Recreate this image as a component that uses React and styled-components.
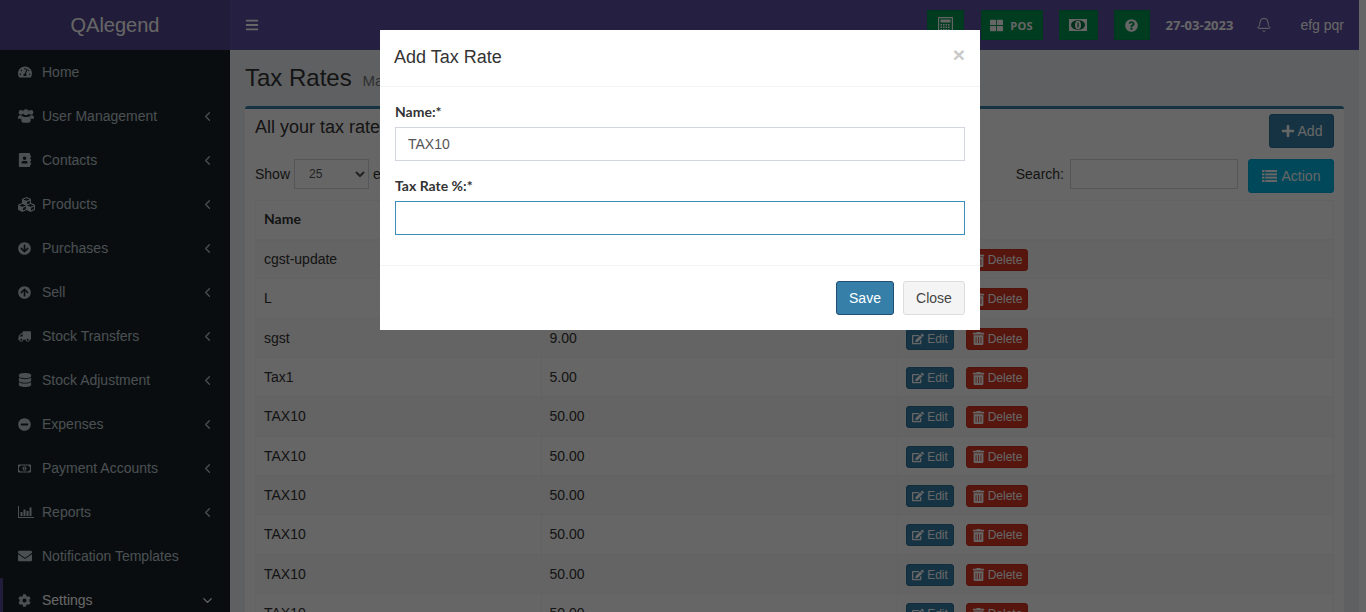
import styled, { createGlobalStyle } from "styled-components";
import {
    FaTachometerAlt, FaAddressBook, FaCubes, FaArrowCircleDown, FaArrowCircleUp, FaTruck,
    FaDatabase, FaMinusCircle, FaRegMoneyBillAlt, FaEnvelope, FaCog,
    FaThLarge, FaQuestionCircle, FaBars, FaPlus, FaEdit, FaTrashAlt,
} from "react-icons/fa";
import { Bell, ChevronDown, ChevronLeft } from "lucide-react";

function UsersIcon() {
    return (
        <svg width="16" height="14" viewBox="0 0 16 14" fill="currentColor">
            <circle cx="3" cy="3.4" r="2.3" />
            <circle cx="13" cy="3.4" r="2.3" />
            <circle cx="8" cy="3.2" r="3" />
            <path d="M0 9.4C0 7.2.8 6.3 2.2 6.3c.6 0 1 .4 2 .6-.4.8-.6 1.6-.6 2.8H1C.4 9.7 0 9.6 0 9.4z" />
            <path d="M16 9.4c0-2.2-.8-3.1-2.2-3.1-.6 0-1 .4-2 .6.4.8.6 1.6.6 2.8H15c.6 0 1-.1 1-.3z" />
            <path d="M4.6 7.2c1 .6 2.1.9 3.4.9s2.400-.3 3.400-.9c.9.5 1.300 2 1.300 3.900 0 1.700-.8 2.600-2.200 2.600H5.500c-1.400 0-2.200-.9-2.200-2.600 0-1.900.4-3.400 1.300-3.900z" />
        </svg>
    );
}

function ReportIcon() {
    return (
        <svg width="16" height="12" viewBox="0 0 16 12" fill="currentColor">
            <rect x="0" y="0" width="1" height="12" />
            <rect x="0" y="11" width="16" height="1" />
            <rect x="2.500" y="6" width="2" height="4" />
            <rect x="5.500" y="3.500" width="2" height="6.500" />
            <rect x="8.500" y="5" width="2" height="5" />
            <rect x="11.500" y="1.500" width="2" height="8.500" />
        </svg>
    );
}

function CalculatorIcon() {
    const keys = [];
    for (let r = 0; r < 3; r++) {
        for (let c = 0; c < 4; c++) {
            keys.push(<rect key={`${r}-${c}`} x={2.500 + c * 2.500} y={7 + r * 2.500} width="1.600" height="1.500" />);
        }
    }
    return (
        <svg width="15" height="16" viewBox="0 0 15 16" fill="currentColor">
            <path fillRule="evenodd" d="M1 0h13a1 1 0 0 1 1 1v14a1 1 0 0 1-1 1H1a1 1 0 0 1-1-1V1a1 1 0 0 1 1-1zm.2 1.200v13.600h12.600V1.200zM2.500 2.500h10v3h-10z" />
            {keys}
        </svg>
    );
}

function MoneyIcon() {
    return (
        <svg width="18" height="12" viewBox="0 0 18 12">
            <rect width="18" height="12" fill="currentColor" />
            <ellipse cx="9" cy="6" rx="7" ry="4.800" fill="#00733f" />
            <ellipse cx="9" cy="6" rx="3" ry="4.300" fill="currentColor" />
            <rect x="8.400" y="3.500" width="1.200" height="5" fill="#00733f" />
        </svg>
    );
}

function ListIcon() {
    const lines = [0, 3.300, 6.600, 9.900];
    return (
        <svg width="15" height="12" viewBox="0 0 15 12" fill="currentColor">
            {lines.map((y) => (
                <g key={y}>
                    <rect x="0" y={y} width="2.500" height="2.100" />
                    <rect x="3.300" y={y} width="11.700" height="2.100" />
                </g>
            ))}
        </svg>
    );
}

const FlippedTruck = styled(FaTruck)`
    transform: scaleX(-1);
`;

const menu = [
    { label: "Home", icon: FaTachometerAlt, size: 14 },
    { label: "User Management", icon: UsersIcon, arrow: true },
    { label: "Contacts", icon: FaAddressBook, size: 14, arrow: true },
    { label: "Products", icon: FaCubes, size: 17, arrow: true },
    { label: "Purchases", icon: FaArrowCircleDown, size: 13, arrow: true },
    { label: "Sell", icon: FaArrowCircleUp, size: 13, arrow: true },
    { label: "Stock Transfers", icon: FlippedTruck, size: 13, arrow: true },
    { label: "Stock Adjustment", icon: FaDatabase, size: 14, arrow: true },
    { label: "Expenses", icon: FaMinusCircle, size: 13, arrow: true },
    { label: "Payment Accounts", icon: FaRegMoneyBillAlt, size: 13, arrow: true },
    { label: "Reports", icon: ReportIcon, arrow: true },
    { label: "Notification Templates", icon: FaEnvelope, size: 14 },
    { label: "Settings", icon: FaCog, size: 13, open: true },
];

const rows = [
    ["cgst-update", ""],
    ["L", ""],
    ["sgst", "9.00"],
    ["Tax1", "5.00"],
    ["TAX10", "50.00"],
    ["TAX10", "50.00"],
    ["TAX10", "50.00"],
    ["TAX10", "50.00"],
    ["TAX10", "50.00"],
    ["TAX10", "50.00"],
];

export default function App() {
    return (
        <Page>
            <GlobalStyle />
            <Main>
                <Side>
                    <Logo>QAlegend</Logo>
                    <nav>
                        {menu.map((item) => (
                            <MenuItem key={item.label} $active={item.open}>
                                <MenuIcon $size={item.size}><item.icon /></MenuIcon>
                                <MenuLabel $active={item.open}>{item.label}</MenuLabel>
                                {item.arrow && <MenuArrow><ChevronLeft size={15} strokeWidth={2} /></MenuArrow>}
                                {item.open && <MenuArrow $open><ChevronDown size={15} strokeWidth={2} /></MenuArrow>}
                            </MenuItem>
                        ))}
                    </nav>
                </Side>
                <Right>
                    <TopBar>
                        <Burger><FaBars /></Burger>
                        <TopTools>
                            <GreenButton $w={37}><CalculatorIcon /></GreenButton>
                            <GreenButton $w={62} $gap={17}><FaThLarge /><PosText>POS</PosText></GreenButton>
                            <GreenButton $w={39} $gap={16}><MoneyIcon /></GreenButton>
                            <GreenButton $w={36} $gap={16}><FaQuestionCircle /></GreenButton>
                            <DateText>27-03-2023</DateText>
                            <BellIcon><Bell size={16} strokeWidth={1.500} /></BellIcon>
                            <UserName>efg pqr</UserName>
                        </TopTools>
                    </TopBar>
                    <Content>
                        <PageTitle>Tax Rates <small>Manage your tax rates</small></PageTitle>
                        <Box>
                            <BoxHead>
                                <BoxTitle>All your tax rates</BoxTitle>
                                <AddButton><FaPlus /> Add</AddButton>
                            </BoxHead>
                            <Controls>
                                <ShowLabel>
                                    Show
                                    <EntriesSelect defaultValue="25">
                                        <option>25</option>
                                        <option>50</option>
                                        <option>100</option>
                                    </EntriesSelect>
                                    entries
                                </ShowLabel>
                                <SearchLabel>
                                    Search:
                                    <SearchInput />
                                </SearchLabel>
                                <ActionButton><ListIcon /> Action</ActionButton>
                            </Controls>
                            <Table>
                                <thead>
                                    <tr>
                                        <HeadCell $w={285.5}>Name</HeadCell>
                                        <HeadCell $w={356.5}>Tax Rate %</HeadCell>
                                        <HeadCell>Action</HeadCell>
                                    </tr>
                                </thead>
                                <tbody>
                                    {rows.map((row, i) => (
                                        <Row key={i} $odd={i % 2 === 0}>
                                            <Cell>{row[0]}</Cell>
                                            <Cell>{row[1]}</Cell>
                                            <Cell>
                                                <RowButtons>
                                                    <EditButton><FaEdit /> Edit</EditButton>
                                                    <DeleteButton><FaTrashAlt /> Delete</DeleteButton>
                                                </RowButtons>
                                            </Cell>
                                        </Row>
                                    ))}
                                </tbody>
                            </Table>
                        </Box>
                    </Content>
                </Right>
            </Main>
            <ScrollStrip />
            <Backdrop />
            <Modal>
                <ModalHead>
                    <ModalTitle>Add Tax Rate</ModalTitle>
                    <CloseX>×</CloseX>
                </ModalHead>
                <ModalBody>
                    <Label>Name:*</Label>
                    <TextInput defaultValue="TAX10" />
                    <Label>Tax Rate %:*</Label>
                    <TextInput $focus />
                </ModalBody>
                <ModalFoot>
                    <SaveButton>Save</SaveButton>
                    <CloseButton>Close</CloseButton>
                </ModalFoot>
            </Modal>
        </Page>
    );
}

const GlobalStyle = createGlobalStyle`
    * { box-sizing: border-box; }
    html, body { margin: 0; height: 100%; overflow: hidden; }
    body { font-family: "Liberation Sans", Arial, sans-serif; font-size: 14px; color: #333; background: #ecf0f5; }
`;

const Page = styled.div`
    display: flex;
    width: 1366px;
    height: 612px;
    overflow: hidden;
`;

const Main = styled.div`
    display: flex;
    flex: 1;
    min-width: 0;
`;

const ScrollStrip = styled.div`
    width: 7px;
    background: #fff;
`;

const Side = styled.aside`
    width: 230px;
    flex-shrink: 0;
    background: #1a2226;
`;

const Logo = styled.div`
    height: 50px;
    background: #54468e;
    color: #fff;
    font-size: 20px;
    line-height: 50px;
    text-align: center;
`;

const MenuItem = styled.div`
    display: flex;
    align-items: center;
    height: 44px;
    padding-left: ${(props) => (props.$active ? "15px" : "18px")};
    padding-right: 15px;
    color: #b8c7ce;
    border-left: ${(props) => (props.$active ? "3px solid #54468e" : "none")};
`;

const MenuIcon = styled.span`
    display: flex;
    align-items: center;
    width: 24px;
    font-size: ${(props) => props.$size || 14}px;
`;

const MenuLabel = styled.span`
    flex: 1;
    color: ${(props) => (props.$active ? "#fff" : "#b8c7ce")};
`;

const MenuArrow = styled.span`
    display: flex;
    color: ${(props) => (props.$open ? "#fff" : "#b8c7ce")};
`;

const Right = styled.div`
    flex: 1;
    min-width: 0;
`;

const TopBar = styled.header`
    display: flex;
    align-items: center;
    justify-content: space-between;
    height: 50px;
    background: #5e4fa2;
    color: #fff;
`;

const Burger = styled.span`
    display: flex;
    margin-left: 15px;
    font-size: 14px;
`;

const TopTools = styled.div`
    display: flex;
    align-items: center;
    padding-right: 15px;
`;

const GreenButton = styled.span`
    display: flex;
    align-items: center;
    justify-content: center;
    gap: 7px;
    width: ${(props) => props.$w}px;
    height: 30px;
    margin-left: ${(props) => props.$gap || 0}px;
    background: #009651;
    border: 1px solid #008d4c;
    color: #fff;
    font-size: 13px;
`;

const PosText = styled.span`
    font-family: "Open Sans", sans-serif;
    font-size: 11px;
    font-weight: 700;
    letter-spacing: 0.3px;
`;

const DateText = styled.span`
    margin-left: 16px;
    font-family: "Open Sans", sans-serif;
    font-size: 13px;
    font-weight: 700;
`;

const BellIcon = styled.span`
    display: flex;
    margin-left: 23px;
`;

const UserName = styled.span`
    margin-left: 28px;
`;

const Content = styled.main`
    padding: 14px 15px 0;
`;

const PageTitle = styled.h1`
    margin: 0;
    height: 42px;
    font-size: 24px;
    font-weight: 500;
    line-height: 27px;
    small {
        margin-left: 4px;
        font-size: 15px;
        font-weight: 300;
        color: #777;
    }
`;

const Box = styled.section`
    background: #fff;
    border-top: 3px solid #367fa9;
    border-radius: 3px;
    padding: 5px 10px;
`;

const BoxHead = styled.div`
    display: flex;
    align-items: flex-start;
    justify-content: space-between;
    height: 45px;
`;

const BoxTitle = styled.h3`
    margin: 3px 0 0;
    font-size: 18px;
    font-weight: 400;
    line-height: 20px;
`;

const BaseButton = styled.span`
    display: inline-flex;
    align-items: center;
    justify-content: center;
    border-radius: 3px;
    color: #fff;
`;

const AddButton = styled(BaseButton)`
    gap: 3px;
    width: 65px;
    height: 34px;
    background: #367fa9;
    border: 1px solid #2f7096;
    svg { font-size: 14px; }
`;

const Controls = styled.div`
    display: flex;
    align-items: flex-start;
    height: 41px;
`;

const ShowLabel = styled.label`
    display: flex;
    align-items: center;
    gap: 4px;
    height: 30px;
    flex: 1;
`;

const EntriesSelect = styled.select`
    width: 75px;
    height: 30px;
    padding: 0 10px;
    background: #fff;
    border: 1px solid #d2d6de;
    border-radius: 0;
    font-family: inherit;
    font-size: 12px;
    color: #555;
`;

const SearchLabel = styled.label`
    display: flex;
    align-items: center;
    gap: 6px;
    height: 30px;
`;

const SearchInput = styled.span`
    width: 168px;
    height: 30px;
    border: 1px solid #d2d6de;
    background: #fff;
`;

const ActionButton = styled(BaseButton)`
    gap: 5px;
    width: 86px;
    height: 34px;
    margin-left: 10px;
    background: #00b4e0;
    border: 1px solid #00acd6;
`;

const Table = styled.table`
    width: 100%;
    border-collapse: collapse;
    table-layout: fixed;
`;

const HeadCell = styled.th`
    width: ${(props) => (props.$w ? `${props.$w}px` : "auto")};
    height: 39px;
    padding: 0 8px 2px;
    background: #fff;
    border: 1px solid #f4f4f4;
    border-bottom-width: 2px;
    font-family: Lato, sans-serif;
    font-size: 14px;
    font-weight: 700;
    text-align: left;
`;

const Row = styled.tr`
    height: 39.33px;
    background: ${(props) => (props.$odd ? "#f9f9f9" : "#fff")};
`;

const Cell = styled.td`
    padding: 0 8px;
    border: 1px solid #f4f4f4;
`;

const RowButtons = styled.div`
    display: flex;
    gap: 12px;
    padding-top: 2px;
`;

const SmallButton = styled(BaseButton)`
    gap: 3px;
    height: 22px;
    font-size: 12px;
`;

const EditButton = styled(SmallButton)`
    width: 48px;
    background: #367fa9;
    border: 1px solid #2f7096;
    svg { font-size: 12px; }
`;

const DeleteButton = styled(SmallButton)`
    width: 62px;
    background: #d73925;
    border: 1px solid #c93421;
    svg { font-size: 13px; }
`;

const Backdrop = styled.div`
    position: fixed;
    inset: 0;
    background: rgba(0, 0, 0, 0.6);
`;

const Modal = styled.div`
    position: fixed;
    top: 30px;
    left: 380px;
    width: 600px;
    height: 300px;
    background: #fff;
    display: flex;
    flex-direction: column;
`;

const ModalHead = styled.div`
    display: flex;
    align-items: center;
    justify-content: space-between;
    height: 57px;
    padding: 0 15px 2px;
    border-bottom: 1px solid #f4f4f4;
`;

const ModalTitle = styled.h4`
    margin: 0 0 0 -1px;
    font-size: 18px;
    font-weight: 400;
    line-height: 26px;
`;

const CloseX = styled.span`
    margin-top: -5px;
    font-size: 21px;
    font-weight: 700;
    color: #c9c9c9;
`;

const ModalBody = styled.div`
    flex: 1;
    padding: 15px;
    border-bottom: 1px solid #f4f4f4;
`;

const Label = styled.label`
    display: block;
    height: 25px;
    font-family: Lato, sans-serif;
    font-size: 14px;
    font-weight: 700;
    line-height: 20px;
`;

const TextInput = styled.input`
    display: block;
    width: 100%;
    height: 34px;
    margin-bottom: 15px;
    padding: 6px 12px;
    border: 1px solid ${(props) => (props.$focus ? "#3c8dbc" : "#d2d6de")};
    outline: none;
    font-family: inherit;
    font-size: 14px;
    color: #555;
`;

const ModalFoot = styled.div`
    display: flex;
    justify-content: flex-end;
    gap: 9px;
    height: 64px;
    padding: 15px;
`;

const SaveButton = styled(BaseButton)`
    width: 58px;
    height: 34px;
    background: #367fa9;
    border: 1px solid #204d74;
`;

const CloseButton = styled(BaseButton)`
    width: 62px;
    height: 34px;
    background: #f4f4f4;
    border: 1px solid #ddd;
    color: #444;
`;
